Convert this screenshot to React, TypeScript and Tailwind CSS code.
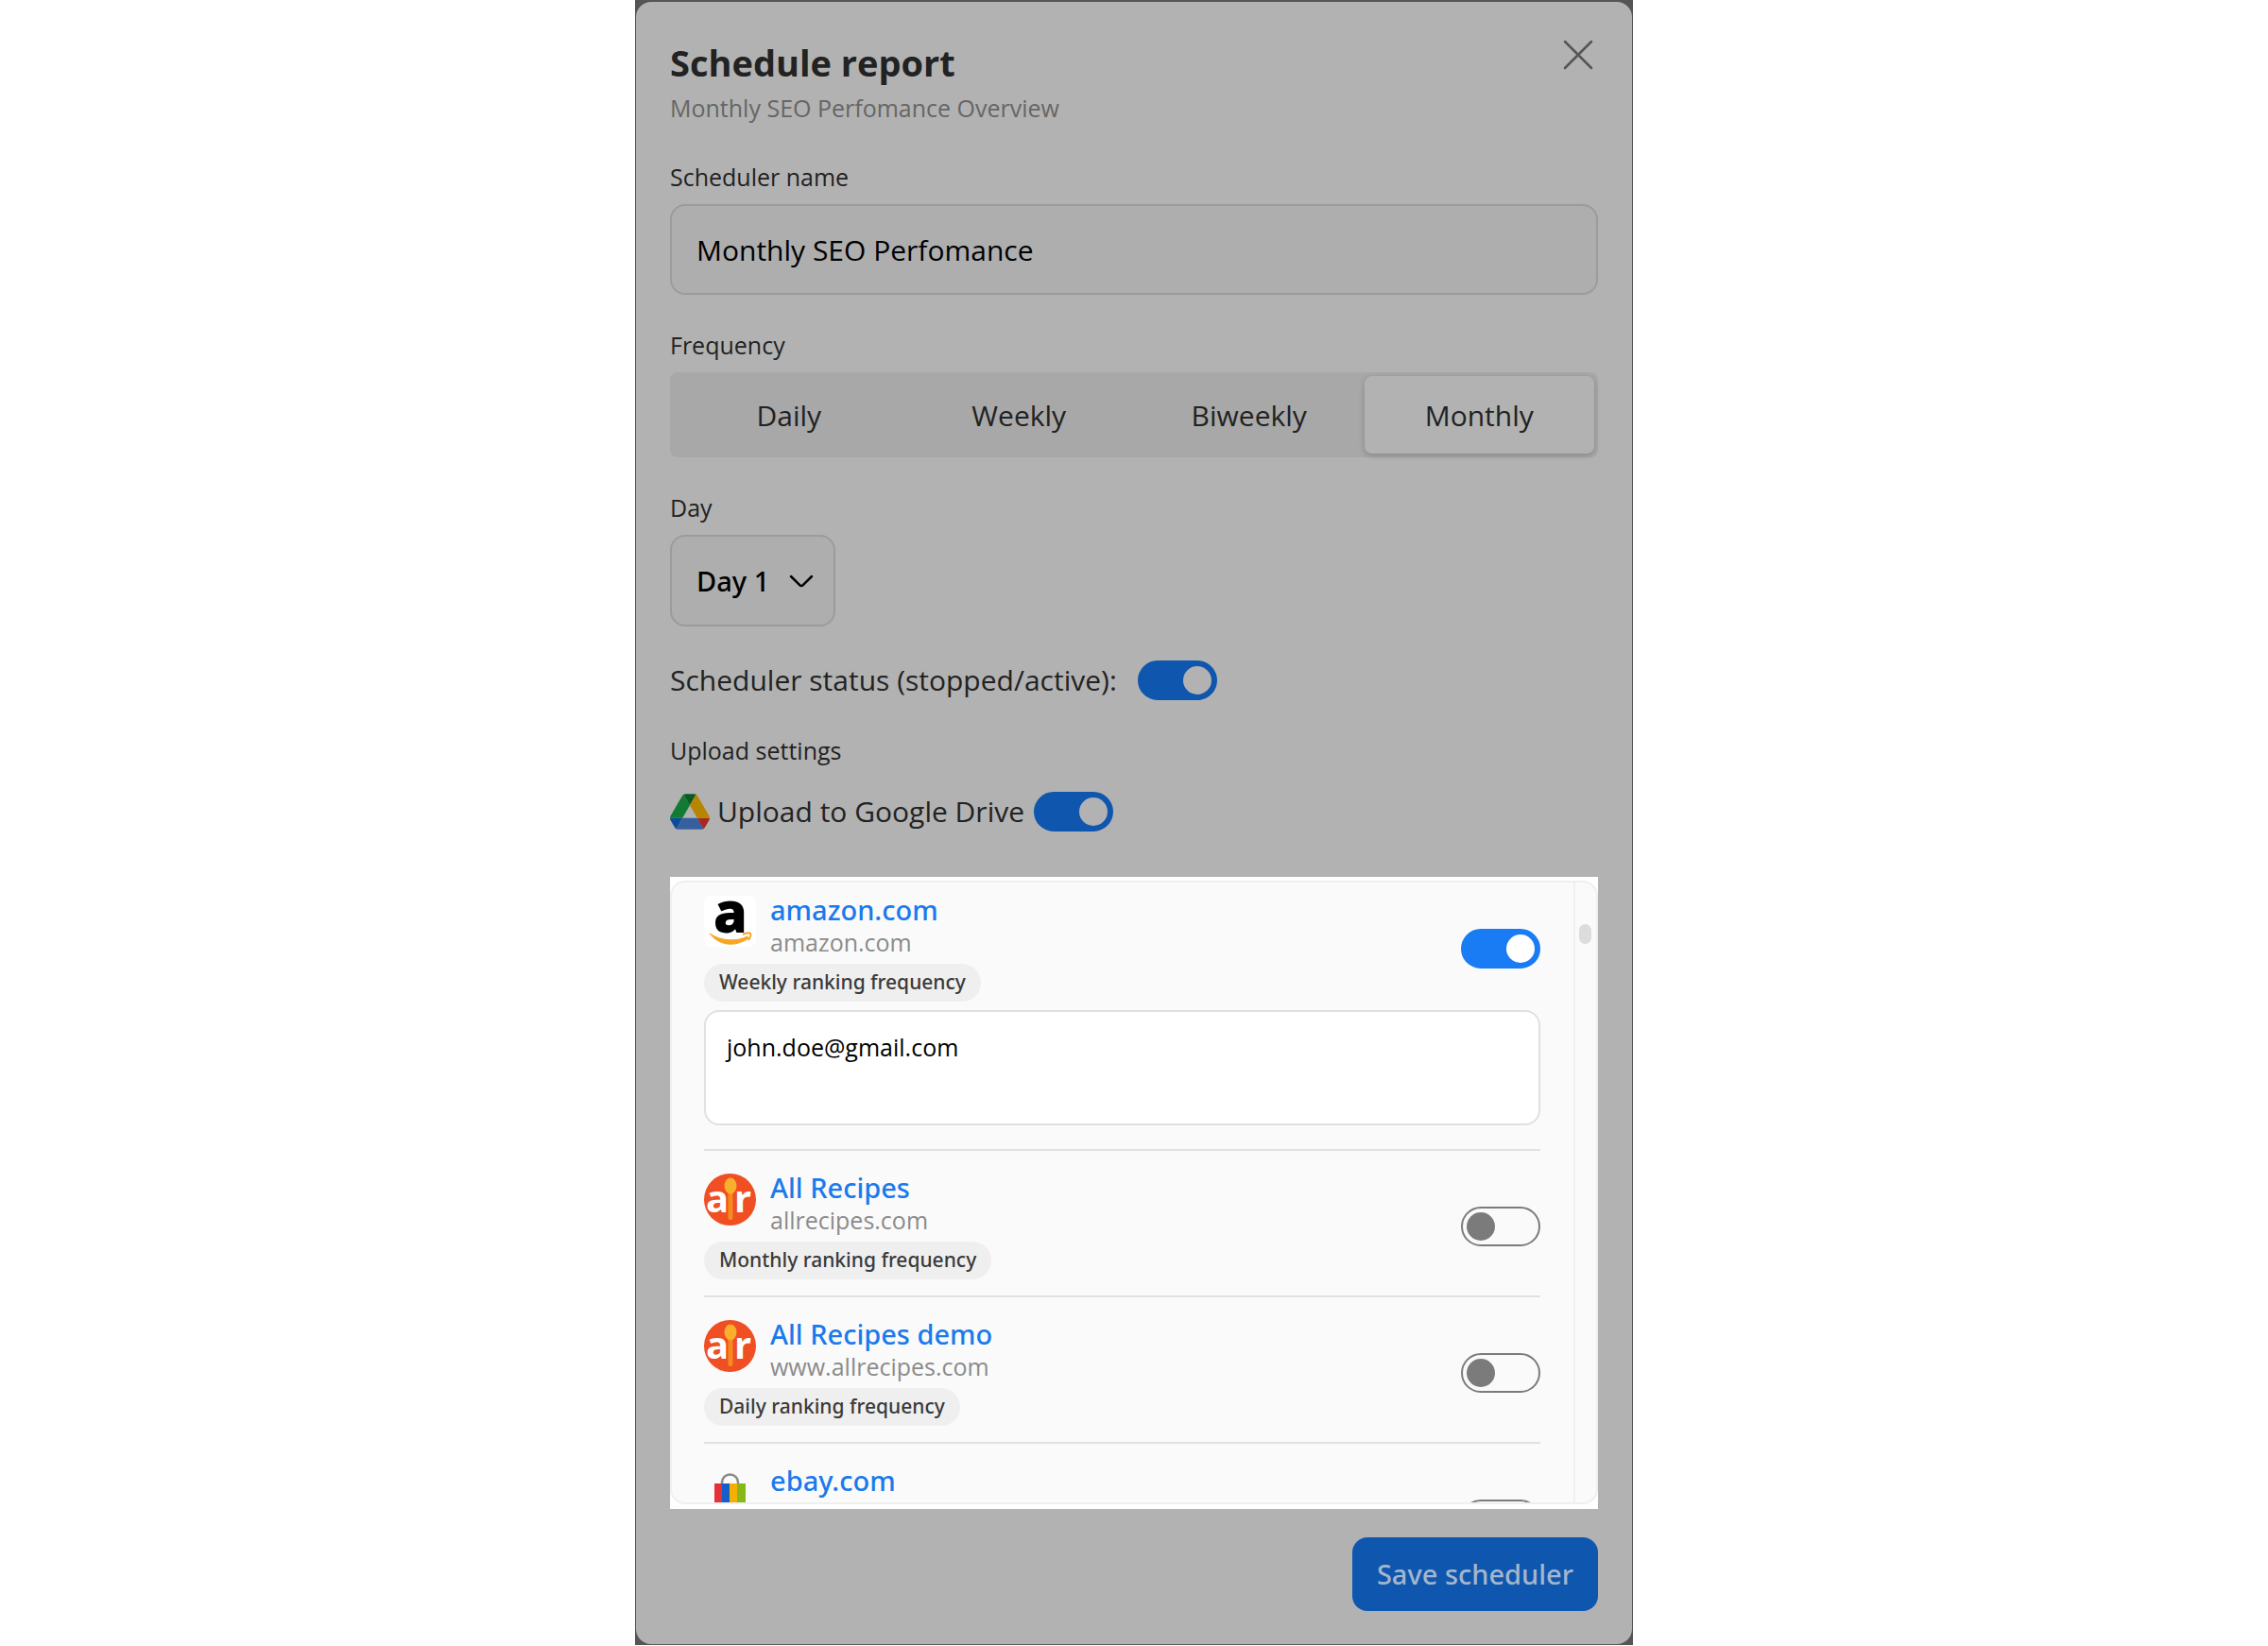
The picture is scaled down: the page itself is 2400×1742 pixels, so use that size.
import { useState } from "react";
import type { ReactNode } from "react";

const FREQUENCIES = ["Daily", "Weekly", "Biweekly", "Monthly"];

const DAYS = ["Day 1", "Day 2", "Day 3", "Day 4", "Day 5"];

function AmazonLogo() {
  return (
    <svg viewBox="0 0 55 55" className="size-[55px] shrink-0 overflow-visible" aria-hidden="true">
      <rect width="55" height="54" rx="8" fill="#fff" />
      <text
        x="28"
        y="38"
        textAnchor="middle"
        fontFamily="Open Sans, sans-serif"
        fontWeight="700"
        fontSize="58"
        fill="#000"
        stroke="#000"
        strokeWidth="2"
      >
        a
      </text>
      <path d="M6 40C18 48 34 49 46 43l1 2C34 54 17 54 6 40z" fill="#f5a623" stroke="#f5a623" strokeWidth="1" />
      <path d="M41 41c4-2 7-2 8-1s0 4-2 7" fill="none" stroke="#f5a623" strokeWidth="2" />
    </svg>
  );
}

function AllRecipesLogo() {
  return (
    <svg viewBox="0 0 55 55" className="size-[55px] shrink-0 overflow-visible" aria-hidden="true">
      <circle cx="27.500" cy="27.500" r="27.500" fill="#f04e23" />
      <g fontFamily="Open Sans, sans-serif" fontWeight="700" fontSize="40" fill="#fff">
        <text x="2" y="41">
          a
        </text>
        <text x="32" y="41">
          r
        </text>
      </g>
      <rect x="25.500" y="16" width="5" height="33" rx="2" fill="#f58a1f" />
      <ellipse cx="28" cy="13" rx="6.500" ry="8.500" fill="#fbae2c" />
    </svg>
  );
}

function EbayLogo() {
  return (
    <svg viewBox="0 0 55 55" className="size-[55px] shrink-0" aria-hidden="true">
      <path d="M19 19v-2a8.500 8.500 0 0 1 17 0v2" fill="none" stroke="#8a8a8a" strokeWidth="2.500" />
      <path d="M11 18h9v30h-9z" fill="#e53238" />
      <path d="M19 18h9v30h-9z" fill="#155fc9" />
      <path d="M27 18h9v30h-9z" fill="#f5af02" />
      <path d="M35 18h9v30h-9z" fill="#86b817" />
    </svg>
  );
}

function DriveLogo() {
  return (
    <svg viewBox="0 0 87.3 78" className="h-[38px] w-[42px] shrink-0" aria-hidden="true">
      <path d="m6.600 66.850 3.850 6.650c.8 1.400 1.950 2.500 3.300 3.300l13.750-23.800h-27.500c0 1.550.4 3.100 1.200 4.500z" fill="#0b4a9c" />
      <path d="m43.650 25-13.750-23.800c-1.350.8-2.500 1.900-3.300 3.300l-25.400 44a9.060 9.060 0 0 0 -1.200 4.500h27.500z" fill="#137a34" />
      <path d="m73.550 76.800c1.350-.8 2.500-1.900 3.300-3.300l1.600-2.750 7.650-13.250c.8-1.400 1.200-2.950 1.200-4.500h-27.502l5.852 11.500z" fill="#a82a1c" />
      <path d="m43.650 25 13.750-23.800c-1.350-.8-2.900-1.200-4.500-1.200h-18.500c-1.600 0-3.150.45-4.500 1.200z" fill="#0a5a26" />
      <path d="m59.800 53h-32.300l-13.750 23.800c1.350.8 2.900 1.200 4.500 1.200h50.800c1.600 0 3.150-.45 4.500-1.200z" fill="#375f9f" />
      <path d="m73.400 26.500-12.700-22c-.8-1.400-1.950-2.500-3.300-3.300l-13.750 23.800 16.150 28h27.450c0-1.550-.4-3.100-1.200-4.500z" fill="#b78500" />
    </svg>
  );
}

type Project = {
  name: string;
  domain: string;
  frequency: string;
  logo: ReactNode;
  emails?: string;
};

const PROJECTS: Project[] = [
  {
    name: "amazon.com",
    domain: "amazon.com",
    frequency: "Weekly",
    logo: <AmazonLogo />,
    emails: "john.doe@gmail.com",
  },
  { name: "All Recipes", domain: "allrecipes.com", frequency: "Monthly", logo: <AllRecipesLogo /> },
  { name: "All Recipes demo", domain: "www.allrecipes.com", frequency: "Daily", logo: <AllRecipesLogo /> },
  { name: "ebay.com", domain: "ebay.com", frequency: "Daily", logo: <EbayLogo /> },
];

type SwitchProps = {
  id?: string;
  label?: string;
  defaultChecked?: boolean;
  dimmed?: boolean;
};

function Switch({ id, label, defaultChecked, dimmed }: SwitchProps) {
  return (
    <input
      type="checkbox"
      role="switch"
      id={id}
      aria-label={label}
      defaultChecked={defaultChecked}
      className={
        "flex h-[42px] w-[84px] shrink-0 cursor-pointer appearance-none items-center rounded-full border-2 border-[#7b7b7b] px-1 before:size-[30px] before:rounded-full before:bg-[#7b7b7b] checked:justify-end " +
        (dimmed
          ? "checked:border-[#0f56ae] checked:bg-[#0f56ae] checked:before:bg-[#b2b2b2]"
          : "checked:border-[#1a7cf5] checked:bg-[#1a7cf5] checked:before:bg-white")
      }
    />
  );
}

function ProjectRow({ project }: { project: Project }) {
  return (
    <li className="border-b-2 border-[#dee1e5] pt-6 pb-[17px] first:pt-3.5 first:pb-[25px]">
      <div className="flex items-center justify-between">
        <div className="flex flex-col items-start gap-1">
          <div className="flex items-start gap-[15px]">
            {project.logo}
            <div>
              <a
                href="#"
                className="block font-['Noto_Sans',sans-serif] text-[29px] leading-[30px] font-medium text-[#1a7aec]"
              >
                {project.name}
              </a>
              <p className="text-[25px] leading-[38px] text-[#8b8b8b]">{project.domain}</p>
            </div>
          </div>
          <span className="rounded-full bg-[#efefef] px-4 pb-0.5 font-['Noto_Sans',sans-serif] text-[21px] leading-[38px] font-medium text-[#3a3a3a]">
            {project.frequency} ranking frequency
          </span>
        </div>
        <Switch label={`Send report for ${project.name}`} defaultChecked={!!project.emails} />
      </div>
      {project.emails && (
        <textarea
          aria-label={`Recipients for ${project.name}`}
          defaultValue={project.emails}
          className="mt-[9px] block h-[122px] w-full resize-none rounded-2xl border-2 border-[#e0e0e0] bg-white px-[22px] py-5 text-[25px] leading-[34px] text-black"
        />
      )}
    </li>
  );
}

export default function App() {
  const [frequency, setFrequency] = useState("Monthly");

  return (
    <div className="min-h-screen bg-white font-['Open_Sans','Noto_Sans',sans-serif] text-[#222]">
      <div className="mx-auto max-w-[1056px] bg-[#555] px-px pt-0.5 pb-px">
        <main className="flex flex-col rounded-2xl bg-[#b2b2b2] px-9 pt-[38px] pb-[35px]">
          {/* Header */}
          <header className="flex items-start justify-between">
            <div>
              <h1 className="text-[38px] leading-[52px] font-bold">Schedule report</h1>
              <p className="mt-[5px] text-[25px] leading-[34px] text-[#666]">Monthly SEO Perfomance Overview</p>
            </div>
            <button type="button" aria-label="Close" className="flex h-9 w-[42px] items-center justify-center">
              <svg viewBox="0 0 32 32" className="size-8" fill="none" stroke="#555" strokeWidth="2.500" strokeLinecap="round">
                <path d="M2 2l28 28M30 2L2 30" />
              </svg>
            </button>
          </header>

          <form className="mt-[39px] flex flex-col" onSubmit={(e) => e.preventDefault()}>
            <div className="flex flex-col gap-9">
              <div className="flex flex-col gap-3">
                <label htmlFor="name" className="text-[25px] leading-[34px]">
                  Scheduler name
                </label>
                <input
                  id="name"
                  type="text"
                  defaultValue="Monthly SEO Perfomance"
                  className="h-24 w-full rounded-2xl border-2 border-[#9b9b9b] bg-[#aeaeae] px-[26px] text-[30px] text-black"
                />
              </div>

              <fieldset>
                <legend className="mb-3 text-[25px] leading-[34px]">Frequency</legend>
                <div className="grid h-[90px] grid-cols-4 rounded-lg bg-[#a8a8a8] p-1">
                  {FREQUENCIES.map((item) => (
                    <label
                      key={item}
                      className="flex cursor-pointer items-center justify-center rounded-lg text-[30px] has-checked:bg-[#b2b2b2] has-checked:shadow-[0_2px_6px_rgba(0,0,0,0.2)]"
                    >
                      <input
                        type="radio"
                        name="frequency"
                        className="sr-only"
                        checked={frequency === item}
                        onChange={() => setFrequency(item)}
                      />
                      {item}
                    </label>
                  ))}
                </div>
              </fieldset>

              <div className="flex flex-col items-start gap-3">
                <label htmlFor="day" className="text-[25px] leading-[34px]">
                  Day
                </label>
                <div className="relative">
                  <select
                    id="day"
                    className="block h-[97px] w-[175px] appearance-none rounded-2xl border-2 border-[#9b9b9b] bg-[#aeaeae] px-[26px] font-['Noto_Sans',sans-serif] text-[29px] font-medium text-black"
                  >
                    {DAYS.map((day) => (
                      <option key={day}>{day}</option>
                    ))}
                  </select>
                  <svg
                    viewBox="0 0 26 14"
                    className="pointer-events-none absolute top-[42px] right-[23px] h-3.5 w-[26px]"
                    fill="none"
                    stroke="#000"
                    strokeWidth="2.500"
                    strokeLinecap="round"
                    strokeLinejoin="round"
                    aria-hidden="true"
                  >
                    <path d="M2 2l9.500 9.300a2 2 0 0 0 3 0L24 2" />
                  </svg>
                </div>
              </div>

              <div className="flex items-center gap-[22px]">
                <label htmlFor="status" className="text-[30px] leading-[42px]">
                  Scheduler status (stopped/active):
                </label>
                <Switch id="status" defaultChecked dimmed />
              </div>

              <section className="flex flex-col gap-[27px]">
                <h2 className="text-[25px] leading-[34px]">Upload settings</h2>
                <div className="flex items-center">
                  <DriveLogo />
                  <label htmlFor="drive" className="mr-2.5 ml-2 text-[30px] leading-[42px]">
                    Upload to Google Drive
                  </label>
                  <Switch id="drive" defaultChecked dimmed />
                </div>
              </section>
            </div>

            {/* Project recipients */}
            <div className="mt-12 bg-white pt-1 pb-[5px]">
              <div className="flex h-[660px] overflow-hidden rounded-2xl border-2 border-[#efefef] bg-[#fafafa]">
                <ul className="min-w-0 flex-1 pr-[35px] pl-[34px]">
                  {PROJECTS.map((project) => (
                    <ProjectRow key={project.name} project={project} />
                  ))}
                </ul>
                <div className="w-6 border-l-2 border-[#efefef] pt-11 pl-1">
                  <div className="h-[21px] w-[13px] rounded-full bg-[#dcdcdc]" />
                </div>
              </div>
            </div>

            <button
              type="submit"
              className="mt-[30px] h-[78px] self-end rounded-2xl bg-[#0f56ae] px-[26px] font-['Noto_Sans',sans-serif] text-[29px] font-medium text-[#a4b6cc]"
            >
              Save scheduler
            </button>
          </form>
        </main>
      </div>
    </div>
  );
}
